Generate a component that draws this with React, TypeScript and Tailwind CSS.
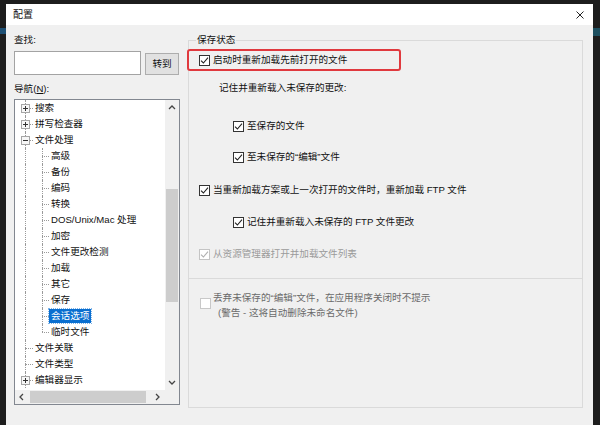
import React from "react";

type Node = { label: string; level: 0 | 1; exp?: "+" | "-"; last?: boolean; selected?: boolean };

const tree: Node[] = [
  { label: "搜索", level: 0, exp: "+" },
  { label: "拼写检查器", level: 0, exp: "+" },
  { label: "文件处理", level: 0, exp: "-" },
  { label: "高级", level: 1 },
  { label: "备份", level: 1 },
  { label: "编码", level: 1 },
  { label: "转换", level: 1 },
  { label: "DOS/Unix/Mac 处理", level: 1 },
  { label: "加密", level: 1 },
  { label: "文件更改检测", level: 1 },
  { label: "加载", level: 1 },
  { label: "其它", level: 1 },
  { label: "保存", level: 1 },
  { label: "会话选项", level: 1, selected: true },
  { label: "临时文件", level: 1, last: true },
  { label: "文件关联", level: 0 },
  { label: "文件类型", level: 0 },
  { label: "编辑器显示", level: 0, exp: "+" },
];

function Expander({ sign }: { sign: "+" | "-" }) {
  return (
    <span className="absolute left-[6px] top-[4px] w-[9px] h-[9px] border border-[#a6a6a6] bg-[#f7f7f7]">
      <span className="absolute left-[1px] top-[3px] w-[5px] h-[1px] bg-[#333]" />
      {sign === "+" && <span className="absolute left-[3px] top-[1px] w-[1px] h-[5px] bg-[#333]" />}
    </span>
  );
}

function TreeRow({ node }: { node: Node }) {
  return (
    <div className="relative h-[16px] flex items-center">
      <span className="absolute left-[10px] top-0 bottom-0 border-l border-dotted border-[#9a9a9a]" />
      {node.level === 0 ? (
        <>
          <span className="absolute left-[10px] w-[8px] top-[8px] border-t border-dotted border-[#9a9a9a]" />
          {node.exp && <Expander sign={node.exp} />}
          <span className="ml-[20px] leading-[14px] text-[#111] whitespace-nowrap">{node.label}</span>
        </>
      ) : (
        <>
          <span className={`absolute left-[27px] top-0 border-l border-dotted border-[#9a9a9a] ${node.last ? "h-[8px]" : "bottom-0"}`} />
          <span className="absolute left-[27px] w-[7px] top-[8px] border-t border-dotted border-[#9a9a9a]" />
          {node.selected ? (
            <span className="ml-[34px] px-[2px] leading-[14px] bg-[#0a6fd0] text-white outline outline-1 outline-dotted outline-[#7fb4e8] whitespace-nowrap">
              {node.label}
            </span>
          ) : (
            <span className="ml-[36px] leading-[14px] text-[#111] whitespace-nowrap">{node.label}</span>
          )}
        </>
      )}
    </div>
  );
}

function Chevron({ dir }: { dir: "up" | "down" | "left" | "right" }) {
  const d = {
    up: "M1 5 L4 2 L7 5",
    down: "M1 2 L4 5 L7 2",
    left: "M5 1 L2 4 L5 7",
    right: "M2 1 L5 4 L2 7",
  }[dir];
  return (
    <svg width="8" height="8" viewBox="0 0 8 8">
      <path d={d} fill="none" stroke="#444" strokeWidth="1.3" />
    </svg>
  );
}

function Check({ checked, disabled }: { checked?: boolean; disabled?: boolean }) {
  return (
    <span
      className={`w-[11px] h-[11px] shrink-0 border bg-white flex items-center justify-center ${
        disabled ? "border-[#c4c4c4]" : checked ? "border-[#333]" : "border-[#c8c8c8]"
      }`}
    >
      {checked && (
        <svg width="9" height="9" viewBox="0 0 9 9">
          <path d="M1 4.6 L3.4 7 L8 1.6" fill="none" stroke={disabled ? "#b0b0b0" : "#222"} strokeWidth="1.1" />
        </svg>
      )}
    </span>
  );
}

function Option({ label, indent, disabled, className = "" }: { label: string; indent?: boolean; disabled?: boolean; className?: string }) {
  return (
    <div className={`h-[16px] flex items-center ${indent ? "pl-[44px]" : "pl-[10px]"} ${className}`}>
      <Check checked disabled={disabled} />
      <span className={`ml-[3px] whitespace-nowrap ${disabled ? "text-[#9a9a9a]" : "text-[#111]"}`}>{label}</span>
    </div>
  );
}

export default function App() {
  return (
    <div className="w-[600px] h-[425px] bg-[#1d1d1d] flex pt-[4px] overflow-hidden font-[family-name:'Liberation_Sans','Noto_Sans_CJK_SC',sans-serif] text-[9.6px]">
      <div className="w-[6px] flex flex-col">
        <div className="mt-[24px] h-[6px] bg-[#1d4f73]" />
      </div>

      <div className="w-[587px] h-[421px] bg-[#f0f0f0] flex flex-col">
        {/* title bar */}
        <div className="h-[21px] bg-white flex items-center justify-between pl-[7px] pr-[9px] shrink-0">
          <span className="text-[10px] text-[#111]">配置</span>
          <svg width="8" height="8" viewBox="0 0 8 8">
            <path d="M0.5 0.5 L7.5 7.5 M7.5 0.5 L0.5 7.5" stroke="#222" strokeWidth="1" />
          </svg>
        </div>

        <div className="flex flex-1">
          {/* left column */}
          <div className="pl-[8px] w-[174px] flex flex-col">
            <div className="mt-[8px] h-[14px] leading-[14px] text-[#111]">查找:</div>
            <div className="mt-[4px] flex items-start">
              <div className="w-[127px] h-[24px] bg-white border border-[#a3a3a3]" />
              <button className="ml-[4px] mt-[2px] w-[34px] h-[22px] bg-[#e1e1e1] border border-[#adadad] text-[#111]">
                转到
              </button>
            </div>
            <div className="mt-[7px] h-[14px] leading-[14px] text-[#111]">
              导航(<span className="underline">N</span>):
            </div>

            <div className="mt-[3px] w-[166px] h-[306px] border border-[#828790] bg-white flex flex-col">
              <div className="flex flex-1 min-h-0">
                <div className="flex-1 overflow-hidden">
                  {tree.map((n) => (
                    <TreeRow key={n.label} node={n} />
                  ))}
                </div>
                <div className="w-[14px] bg-[#f0f0f0] flex flex-col">
                  <div className="h-[16px] flex items-center justify-center">
                    <Chevron dir="up" />
                  </div>
                  <div className="flex-1 px-[1px]">
                    <div className="mt-[73px] h-[113px] bg-[#cdcdcd]" />
                  </div>
                  <div className="h-[14px] flex items-center justify-center">
                    <Chevron dir="down" />
                  </div>
                </div>
              </div>
              <div className="h-[14px] bg-[#f0f0f0] flex">
                <div className="w-[14px] flex items-center justify-center">
                  <Chevron dir="left" />
                </div>
                <div className="flex-1 py-[1px]">
                  <div className="ml-[1px] w-[116px] h-full bg-[#cdcdcd]" />
                </div>
                <div className="w-[14px] flex items-center justify-center">
                  <Chevron dir="right" />
                </div>
                <div className="w-[14px]" />
              </div>
            </div>
          </div>

          {/* right column */}
          <div className="ml-[8px] mt-[15px] w-[395px] flex flex-col">
            <div className="relative h-[239px] border border-[#dadada] flex flex-col">
              <span className="absolute -top-[8px] left-[7px] px-[1px] bg-[#f0f0f0] leading-[14px] text-[#111]">保存状态</span>
              <div className="absolute left-[-2px] top-[8px] w-[214px] h-[22px] border-2 border-[#e0393e] rounded-[3px]" />

              <Option label="启动时重新加载先前打开的文件" className="mt-[11px]" />
              <div className="mt-[12px] h-[16px] flex items-center pl-[30px] text-[#111]">记住并重新载入未保存的更改:</div>
              <Option label="至保存的文件" indent className="mt-[22px]" />
              <Option label="至未保存的“编辑”文件" indent className="mt-[15px]" />
              <Option label="当重新加载方案或上一次打开的文件时，重新加载 FTP 文件" className="mt-[17px]" />
              <Option label="记住并重新载入未保存的 FTP 文件更改" indent className="mt-[16px]" />
              <Option label="从资源管理器打开并加载文件列表" disabled className="mt-[16px]" />
            </div>

            <div className="h-[129px] border border-t-0 border-[#dadada] pt-[11px] pl-[11px] flex items-start">
              <span className="mt-[8px]">
                <Check />
              </span>
              <div className="ml-[2px] text-[#6a6a6a]">
                <div className="h-[15px] leading-[15px] whitespace-nowrap">丢弃未保存的“编辑”文件，在应用程序关闭时不提示</div>
                <div className="h-[15px] leading-[15px] pl-[5px] whitespace-nowrap">(警告 - 这将自动删除未命名文件)</div>
              </div>
            </div>
          </div>
        </div>
      </div>

      <div className="w-[7px] flex flex-col">
        <div className="mt-[24px] h-[8px] bg-[#1d4f5f]" />
      </div>
    </div>
  );
}
